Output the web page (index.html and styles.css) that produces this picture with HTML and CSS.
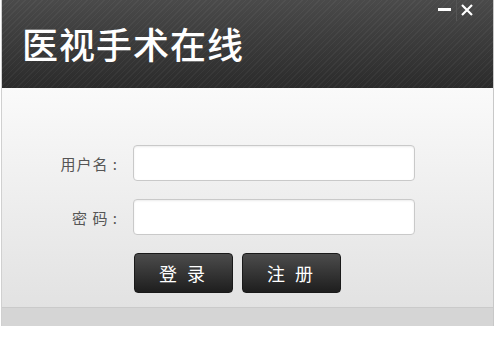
FILE: index.html
```html
<!DOCTYPE html>
<html lang="zh-CN">
<head>
    <meta charset="UTF-8">
    <title>医视手术在线</title>
    <link rel="stylesheet" href="styles.css">
</head>
<body>
    <div class="win">
        <div class="head">
            <h1 class="logo">医视手术在线</h1>
            <div class="ctrl">
                <span class="min"></span>
                <span class="sep"></span>
                <svg class="close" width="12" height="12" viewBox="0 0 12 12">
                    <path d="M1 1L11 11M11 1L1 11" stroke="#fff" stroke-width="2.2"/>
                </svg>
            </div>
        </div>
        <div class="main">
            <div class="row">
                <label class="lbl">用户名 :</label>
                <input class="ipt" type="text">
            </div>
            <div class="row">
                <label class="lbl">密 码 :</label>
                <input class="ipt" type="password">
            </div>
            <div class="btns">
                <button class="btn">登 录</button>
                <button class="btn">注 册</button>
            </div>
        </div>
        <div class="foot"></div>
    </div>
</body>
</html>
```

FILE: styles.css
```css
*{
    margin: 0;
    padding: 0;
    box-sizing: border-box;
}
body{
    background: #fff;
    font-family: "Noto Sans CJK SC", "Liberation Sans", sans-serif;
}
.win{
    width: 493px;
    margin-left: 1px;
    height: 326px;
    display: flex;
    flex-direction: column;
    border-left: 1px solid #d0d0d0;
    border-right: 1px solid #c8c8c8;
}
.head{
    height: 88px;
    position: relative;
    background:
        repeating-linear-gradient(135deg, rgba(255,255,255,0.04) 0 1px, transparent 1px 4px),
        linear-gradient(#4a4a4a, #2b2b2b);
    padding: 19px 0 0 20px;
}
.logo{
    color: #fff;
    font-size: 36px;
    font-weight: 500;
    letter-spacing: 1px;
    line-height: 48px;
}
.ctrl{
    position: absolute;
    top: 0;
    right: 20px;
    display: flex;
    align-items: flex-start;
}
.min{
    width: 13px;
    height: 3px;
    background: #fff;
    margin-top: 8px;
}
.sep{
    width: 1px;
    height: 21px;
    background: #222;
    border-right: 1px solid #555;
    margin: 0 4px 0 5px;
}
.close{
    margin-top: 4px;
}
.main{
    flex: 1;
    background: linear-gradient(#fafafa, #e2e2e2);
    padding: 57px 0 0 0;
}
.row{
    display: flex;
    align-items: center;
    margin-bottom: 18px;
}
.lbl{
    width: 131px;
    text-align: right;
    font-size: 15px;
    letter-spacing: 1px;
    color: #555;
    padding-right: 15px;
    white-space: pre;
}
.ipt{
    width: 282px;
    height: 36px;
    border: 1px solid #c9c9c9;
    border-radius: 4px;
    background: #fff;
    box-shadow: inset 0 1px 2px rgba(0,0,0,0.08);
}
.btns{
    display: flex;
    gap: 9px;
    padding-left: 132px;
    margin-top: 5px;
}
.btn{
    width: 99px;
    height: 40px;
    border: 1px solid #1a1a1a;
    border-radius: 4px;
    background: linear-gradient(#4c4c4c, #1e1e1e);
    color: #fff;
    font-family: "Noto Sans CJK SC", sans-serif;
    font-size: 18px;
    letter-spacing: 3px;
}
.foot{
    height: 19px;
    background: #d5d5d5;
    border-top: 1px solid #cacaca;
}
```
